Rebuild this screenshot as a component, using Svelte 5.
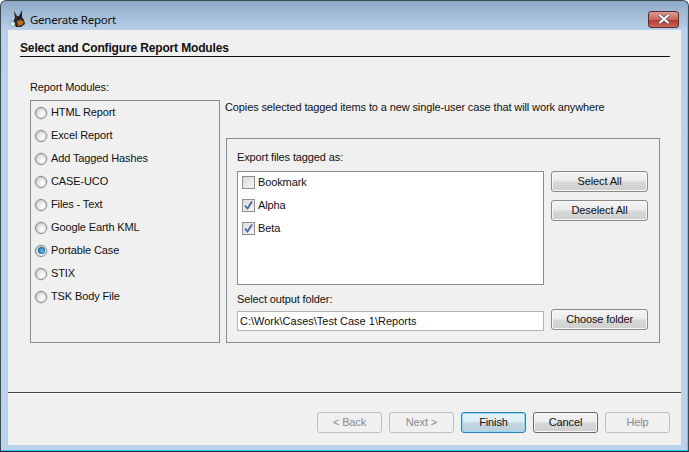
<script>
	let modules = ['HTML Report', 'Excel Report', 'Add Tagged Hashes', 'CASE-UCO', 'Files - Text', 'Google Earth KML', 'Portable Case', 'STIX', 'TSK Body File'];
	let selected = 'Portable Case';
	let tags = [
		{ name: 'Bookmark', checked: false },
		{ name: 'Alpha', checked: true },
		{ name: 'Beta', checked: true }
	];
</script>

<div class="window">
	<div class="titlebar">
		<svg class="appicon" width="18" height="18" viewBox="0 0 18 18">
			<path d="M5 1 L8 6 L10 6 L13 0 L13 7 L15 10 L16 14 L12 17 L7 17 L4 12 L6 8 Z" fill="#2b2422" />
			<path d="M8 11 L12 10 L15 12 L13 15 L9 16 Z" fill="#b86c1e" />
			<circle cx="3.5" cy="14" r="2.4" fill="#e4f1f4" stroke="#7ea4b0" />
		</svg>
		<span class="title">Generate Report</span>
		<div class="close">
			<svg width="14" height="10" viewBox="0 0 14 10">
				<path d="M2.5 1 L11.5 9 M11.5 1 L2.5 9" stroke="#4a4a52" stroke-width="3.6" />
				<path d="M2.5 1 L11.5 9 M11.5 1 L2.5 9" stroke="#fff" stroke-width="2.2" />
			</svg>
		</div>
	</div>
	<div class="content">
		<div class="header">Select and Configure Report Modules</div>
		<div class="main">
			<div class="leftcol">
				<div class="label">Report Modules:</div>
				<div class="modules">
					{#each modules as m}
						<div class="radiorow">
							<span class="radio" class:on={m === selected}></span>
							<span class="rowtext">{m}</span>
						</div>
					{/each}
				</div>
			</div>
			<div class="rightcol">
				<div class="desc">Copies selected tagged items to a new single-user case that will work anywhere</div>
				<div class="config">
					<div class="label">Export files tagged as:</div>
					<div class="tagrow">
						<div class="taglist">
							{#each tags as t}
								<div class="checkrow">
									<span class="check">
										{#if t.checked}
											<svg width="11" height="11" viewBox="0 0 11 11">
												<path d="M2 5.5 L4.5 8.5 L9 1.5" fill="none" stroke="#4a62a8" stroke-width="1.8" />
											</svg>
										{/if}
									</span>
									<span class="rowtext">{t.name}</span>
								</div>
							{/each}
						</div>
						<div class="sidebtns">
							<button class="btn">Select All</button>
							<button class="btn">Deselect All</button>
						</div>
					</div>
					<div class="label outlabel">Select output folder:</div>
					<div class="pathrow">
						<div class="path">C:\Work\Cases\Test Case 1\Reports</div>
						<button class="btn choose">Choose folder</button>
					</div>
				</div>
			</div>
		</div>
		<div class="separator"></div>
		<div class="footer">
			<button class="btn nav" disabled>&lt; Back</button>
			<button class="btn nav" disabled>Next &gt;</button>
			<button class="btn nav default">Finish</button>
			<button class="btn nav cancel">Cancel</button>
			<button class="btn nav" disabled>Help</button>
		</div>
	</div>
</div>

<style>
	:global(body) {
		margin: 0;
		background: #fff;
	}
	.window {
		width: 689px;
		height: 452px;
		box-sizing: border-box;
		display: flex;
		flex-direction: column;
		font-family: "Liberation Sans", Arial, sans-serif;
		font-size: 11px;
		letter-spacing: -0.12px;
		color: #111;
		background: linear-gradient(#8fa9c6, #b9d1ea 30px, #bad3ec);
		border: 1px solid #3c4a55;
		border-bottom: 1px solid #1d2f3a;
		border-radius: 6px 6px 0 0;
		padding: 0 7px 6px 7px;
		box-shadow: inset 0 -1px 0 #2fc4e0, inset -1px 0 0 #6fc6e0;
	}
	.titlebar {
		height: 29px;
		box-sizing: border-box;
		padding-top: 7px;
		flex: none;
		display: flex;
		align-items: center;
	}
	.appicon {
		margin: 0 3px 0 1px;
	}
	.title {
		font-family: "Noto Sans", sans-serif;
		font-size: 11.5px;
		letter-spacing: -0.25px;
		color: #111;
	}
	.close {
		margin-left: auto;
		margin-right: 2px;
		width: 29px;
		height: 15px;
		display: flex;
		align-items: center;
		justify-content: center;
		border: 1px solid #5d2a30;
		border-radius: 3px;
		background: linear-gradient(#dc9a90, #c8685c 50%, #b53b2f 55%, #c86a5a);
	}
	.content {
		flex: 1;
		background: #f0f0f0;
		display: flex;
		flex-direction: column;
		min-height: 0;
	}
	.header {
		margin: 12px 11px 0 12px;
		height: 14px;
		line-height: 13px;
		font-size: 12px;
		letter-spacing: -0.15px;
		font-weight: bold;
		border-bottom: 1px solid #111;
	}
	.main {
		display: flex;
		padding: 23px 21px 0 22px;
		gap: 6px;
		flex: none;
	}
	.leftcol {
		width: 190px;
	}
	.label {
		height: 14px;
		line-height: 14px;
	}
	.leftcol .label {
		margin-bottom: 6px;
	}
	.modules {
		height: 243px;
		box-sizing: border-box;
		border: 1px solid #8a8a94;
		padding: 0 4px;
	}
	.radiorow {
		height: 23px;
		display: flex;
		align-items: center;
		gap: 4px;
	}
	.rowtext {
		margin-bottom: 2px;
	}
	.radio {
		width: 10px;
		height: 10px;
		border-radius: 50%;
		border: 1px solid #8b8c8c;
		background: radial-gradient(circle at 65% 65%, #fff, #ececec 40%, #c4c4c4 85%);
		box-shadow: 0 0 0 0.5px #c8c8c8;
		position: relative;
	}
	.radio.on::after {
		content: "";
		position: absolute;
		left: 1.5px;
		top: 1.5px;
		width: 7px;
		height: 7px;
		border-radius: 50%;
		background: radial-gradient(circle at 55% 55%, #6fd0f0, #0c5f9c 70%);
	}
	.rightcol {
		flex: 1;
		display: flex;
		flex-direction: column;
		min-width: 0;
	}
	.desc {
		height: 38px;
		margin-top: 20px;
		margin-left: -1px;
		line-height: 14px;
		white-space: nowrap;
	}
	.config {
		box-sizing: border-box;
		height: 205px;
		border: 1px solid #8a8a94;
		padding: 11px 11px 0 10px;
	}
	.config > .label {
		margin-bottom: 7px;
	}
	.tagrow {
		display: flex;
		gap: 7px;
	}
	.taglist {
		width: 308px;
		height: 114px;
		box-sizing: border-box;
		background: #fff;
		border: 1px solid #8a8a94;
		padding: 0 4px;
	}
	.checkrow {
		height: 23px;
		display: flex;
		align-items: center;
		gap: 3px;
	}
	.checkrow:first-child {
		margin-top: -1px;
	}
	.check {
		width: 11px;
		height: 11px;
		border: 1px solid #8e8f8f;
		background: linear-gradient(135deg, #dcdcdc, #f4f4f4);
		display: flex;
	}
	.sidebtns {
		display: flex;
		flex-direction: column;
		gap: 8px;
	}
	.config > .outlabel {
		margin-top: 7px;
		margin-bottom: 5px;
	}
	.pathrow {
		display: flex;
		gap: 7px;
	}
	.path {
		width: 308px;
		height: 20px;
		box-sizing: border-box;
		background: #fff;
		border: 1px solid #b5b5b5;
		line-height: 18px;
		padding-left: 2px;
		letter-spacing: 0;
	}
	.btn {
		width: 97px;
		height: 21px;
		padding: 0 0 2px;
		box-sizing: border-box;
		font: inherit;
		letter-spacing: inherit;
		color: #111;
		border: 1px solid #8a8a8a;
		border-radius: 3px;
		background: linear-gradient(#f4f4f4, #ebebeb 48%, #d8d8d8 52%, #cfcfcf);
		box-shadow: inset 0 0 0 1px #f8f8f8;
	}
	.choose {
		margin-top: -2px;
	}
	.separator {
		margin-top: 49px;
		height: 2px;
		flex: none;
		background: #444;
		border-bottom: 1px solid #fff;
		box-sizing: border-box;
	}
	.footer {
		display: flex;
		justify-content: flex-end;
		gap: 7px;
		padding: 18px 11px 0 0;
	}
	.nav {
		width: 65px;
	}
	.nav:disabled {
		color: #8a8a8a;
		border-color: #bdbdbd;
		background: #f0f0f0;
		box-shadow: none;
	}
	.default {
		border-color: #2c7fb0;
		background: linear-gradient(#eaf4fa, #dcebf4 48%, #c3d6e2 52%, #bcd0dc);
		box-shadow: inset 0 0 0 1px #8fdcf4;
	}
	.cancel {
		border-color: #6a6a6a;
	}
</style>
